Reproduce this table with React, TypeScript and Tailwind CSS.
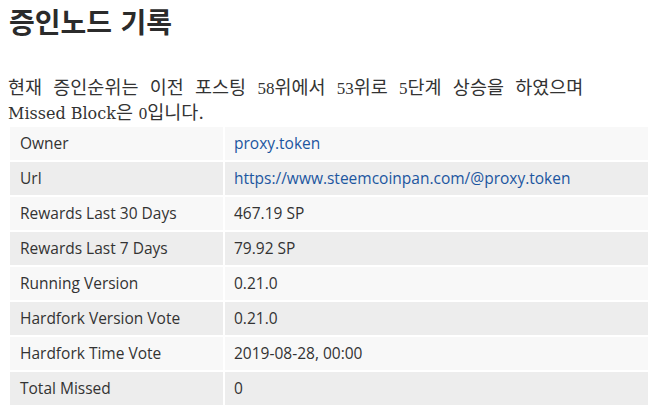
import React from "react";

const rows: { k: string; v: string; link?: boolean }[] = [
  { k: "Owner", v: "proxy.token", link: true },
  { k: "Url", v: "https://www.steemcoinpan.com/@proxy.token", link: true },
  { k: "Rewards Last 30 Days", v: "467.19 SP" },
  { k: "Rewards Last 7 Days", v: "79.92 SP" },
  { k: "Running Version", v: "0.21.0" },
  { k: "Hardfork Version Vote", v: "0.21.0" },
  { k: "Hardfork Time Vote", v: "2019-08-28, 00:00" },
  { k: "Total Missed", v: "0" },
];

const D = ({ children }: { children: React.ReactNode }) => (
  <span className="text-[17px]" style={{ fontFamily: '"Liberation Serif", serif' }}>
    {children}
  </span>
);

export default function App() {
  return (
    <div className="w-[648px] h-[405px] overflow-hidden bg-white text-[#333]">
      <h2
        className="pl-[9px] h-[76px] text-[28px] font-bold leading-[42px] text-[#2b2b2b] [word-spacing:2px]"
        style={{ fontFamily: '"Noto Sans CJK KR", "Noto Sans", sans-serif' }}
      >
        증인노드 기록
      </h2>
      <p
        className="pl-[8px] text-[18.5px] leading-[24px] text-[#333] [word-spacing:5.4px]"
        style={{ fontFamily: '"DejaVu Serif", "Noto Sans CJK KR", serif' }}
      >
        현재 증인순위는 이전 포스팅 <D>58</D>위에서 <D>53</D>위로 <D>5</D>단계 상승을 하였으며
        <br />
        <span className="[word-spacing:0px]">
          <span className="text-[16px]">Missed Block</span>은 <D>0</D>입니다.
        </span>
      </p>
      <div
        className="mt-[1px] ml-[10px] flex flex-col gap-[2px] text-[15.5px] text-[#333]"
        style={{ fontFamily: '"Open Sans", sans-serif' }}
      >
        {rows.map((r, i) => (
          <div
            key={r.k}
            className={
              "flex h-[33px] items-center " +
              (i % 2 === 0 ? "bg-[#f8f8f8]" : "bg-[#ededed]")
            }
          >
            <div className="w-[215px] h-full flex items-center pl-[10px] shrink-0 border-r-2 border-white">
              {r.k}
            </div>
            <div
              className={
                "flex-1 h-full flex items-center pl-[9px] " +
                (r.link ? "text-[#1c56a0]" : "")
              }
            >
              {r.v}
            </div>
          </div>
        ))}
      </div>
    </div>
  );
}
